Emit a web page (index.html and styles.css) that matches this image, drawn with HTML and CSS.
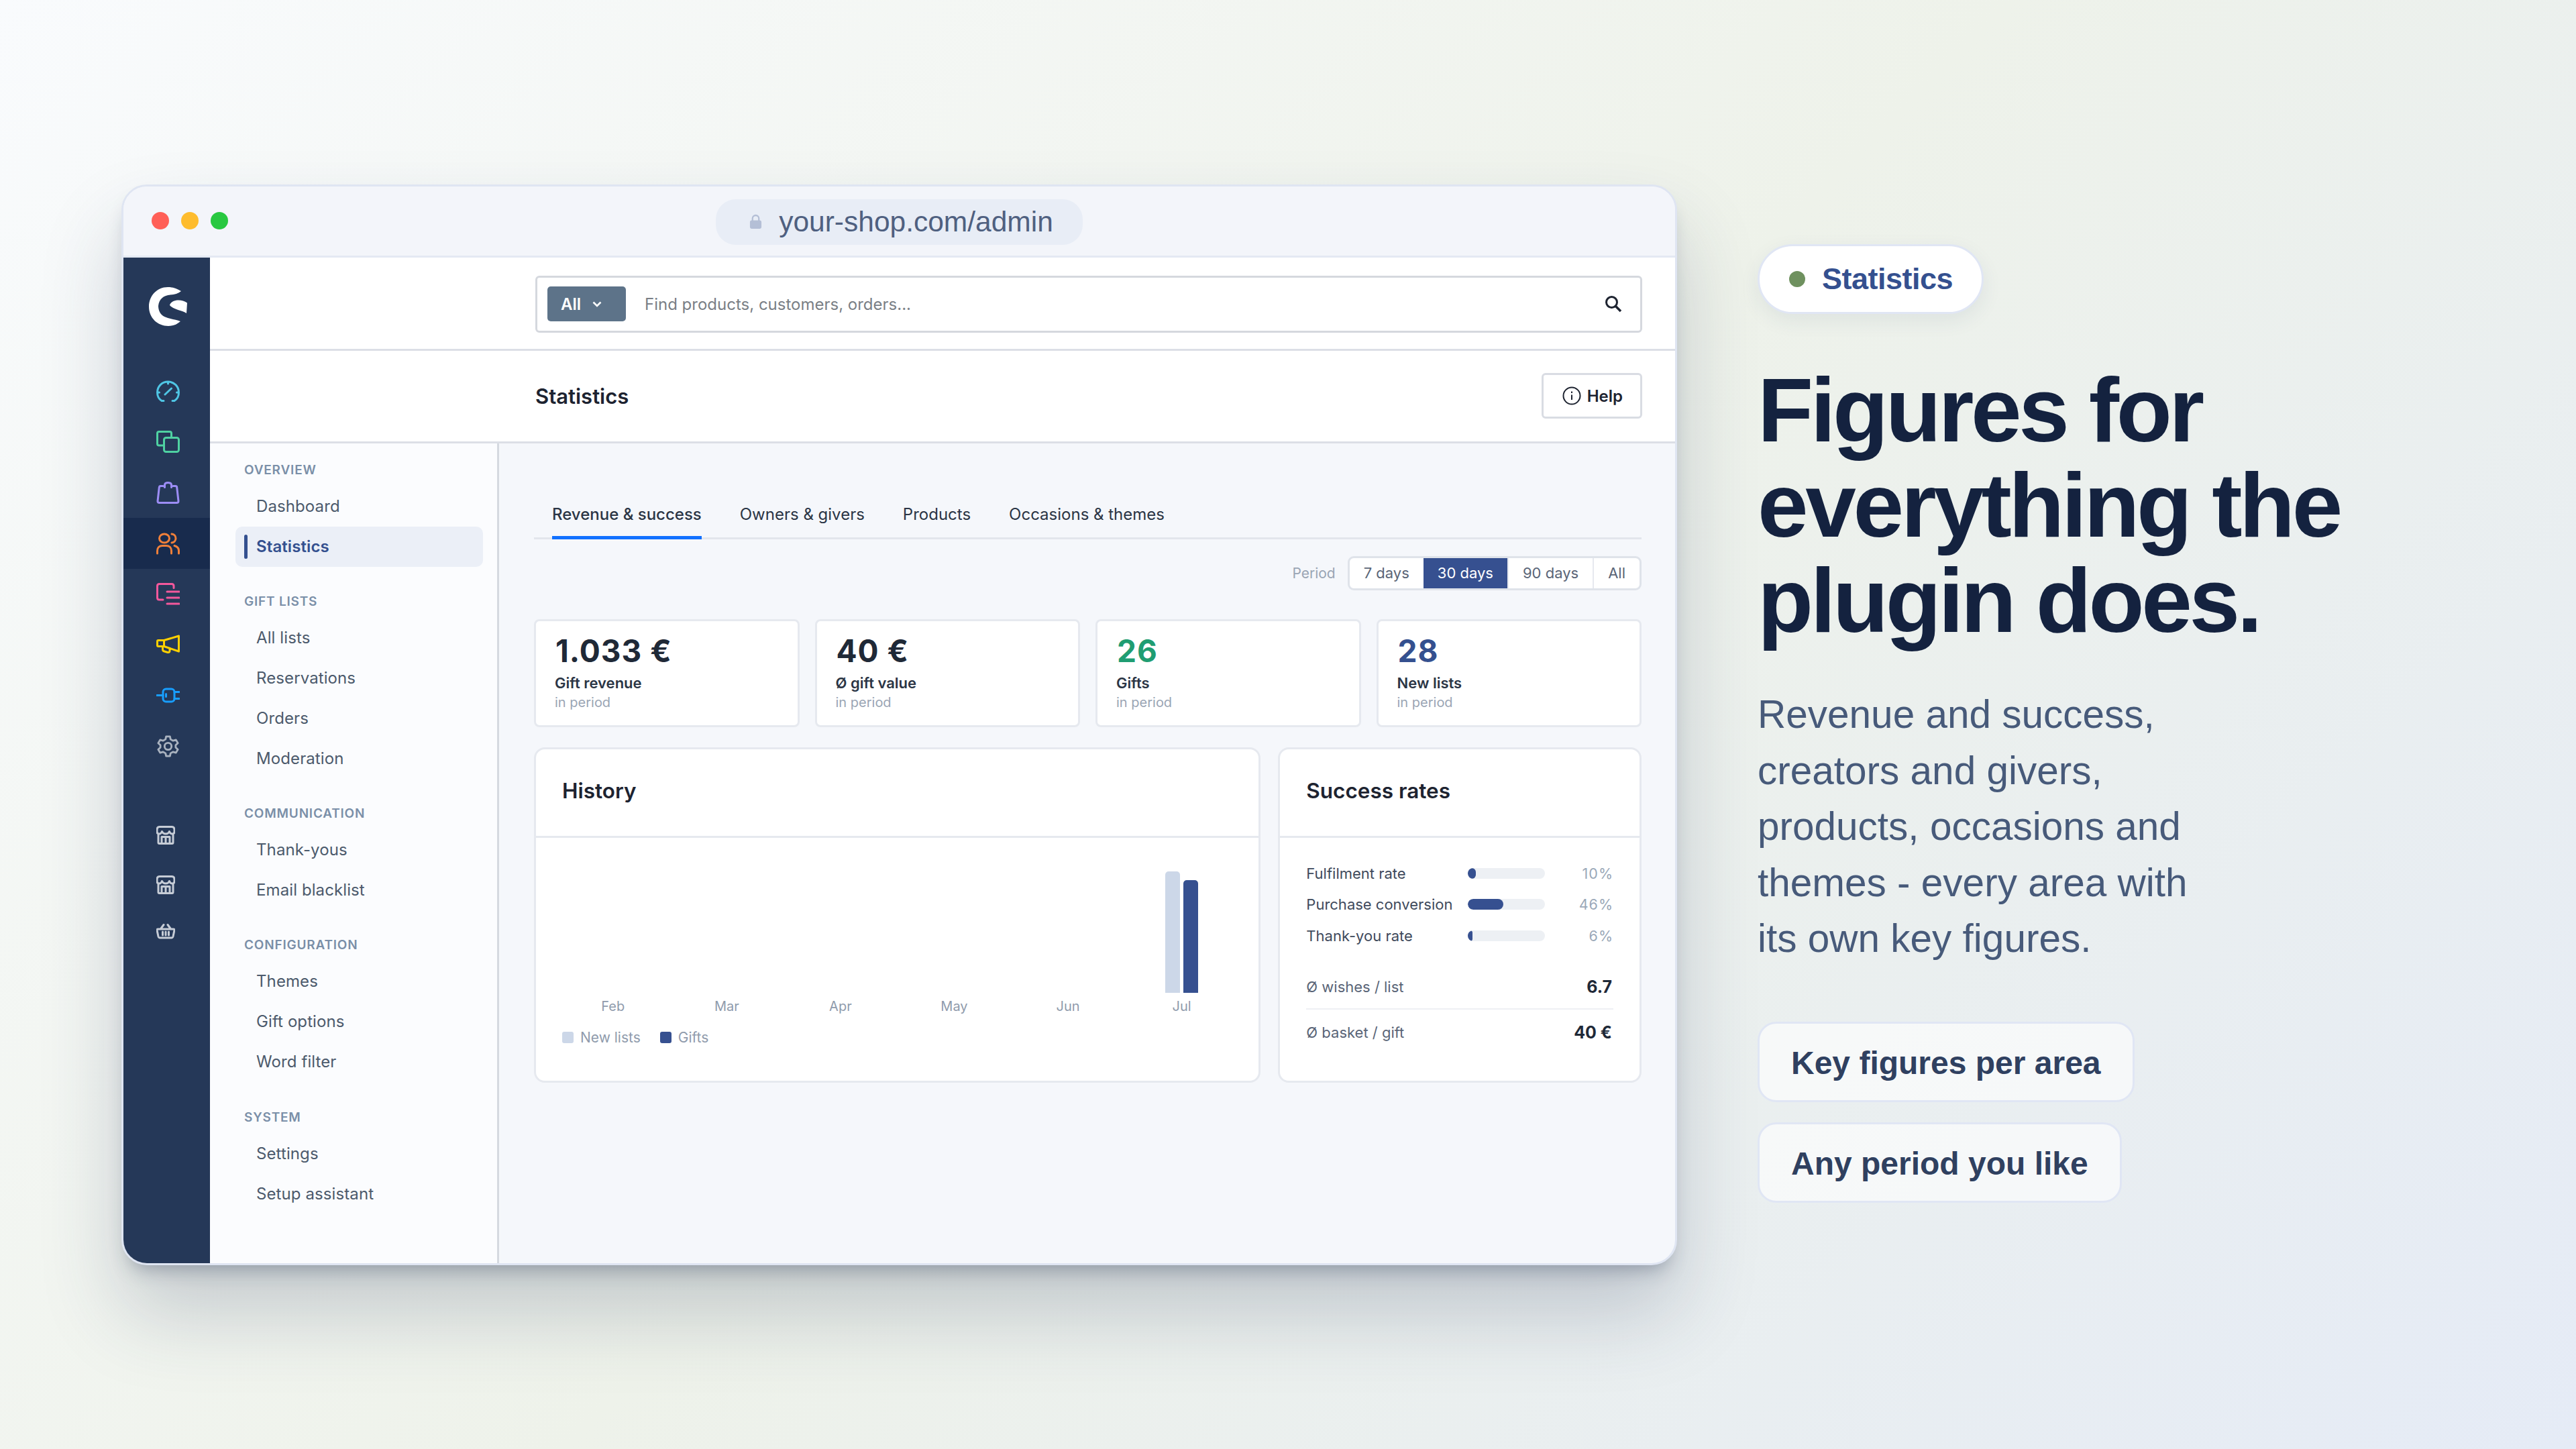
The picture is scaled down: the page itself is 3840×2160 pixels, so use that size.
FILE: index.html
```html
<!DOCTYPE html>
<html lang="en">
<head>
	<meta charset="utf-8">
	<title>Statistics</title>
	<link rel="stylesheet" href="styles.css">
</head>
<body>
	<div class="stage">
		<div class="window">
			<div class="window__bar">
				<div class="window__dots">
					<span class="dot dot--red"></span>
					<span class="dot dot--yellow"></span>
					<span class="dot dot--green"></span>
				</div>
				<div class="url">
					<svg class="url__lock" viewBox="0 0 20 24"><path d="M5 11V7a5 5 0 0 1 10 0v4" fill="none" stroke="currentColor" stroke-width="2.4"/><rect x="1" y="10" width="18" height="13" rx="2.5" fill="currentColor"/></svg>
					<span>your-shop.com/admin</span>
				</div>
			</div>
			<div class="window__body">
				<nav class="rail">
					<div class="rail__logo">
						<svg viewBox="0 0 58 58" width="58" height="58"><path fill="#fff" d="M48 6C41 1.500 35 0 28 0C12 0 0 13 0 29C0 46 13 58 29 58C36 58 42 55.500 47 51C40 48 30 47.500 23 44C17 41 14 35 14 28C15 18 22 12 32 11.500C38 11 44 9.500 48 6Z"/><path fill="#fff" d="M31 27C33 19 48 17 57 23.500L56 39C48 34 37 34 31 27Z"/></svg>
					</div>
					<a class="rail__item rail__item--cyan">
						<svg viewBox="0 0 35 33"><path d="M8 30.500C4 28 1.500 23 1.500 18C1.500 9 8.500 2 17.500 2S33.500 9 33.500 18C33.500 23 31 28 27 30.500M17.500 2V5M1.500 18H4.500M33.500 18H30.500M13 21L22.500 12M8 30.500H11M24 30.500H27"/></svg>
					</a>
					<a class="rail__item rail__item--green">
						<svg viewBox="0 0 35 33"><path d="M10.500 22H4Q1.500 22 1.500 19.500V4Q1.500 1.500 4 1.500H20Q22.500 1.500 22.500 4V10.500"/><rect x="11.500" y="10.500" width="22" height="21" rx="3"/></svg>
					</a>
					<a class="rail__item rail__item--purple">
						<svg viewBox="0 0 35 33"><path d="M10 6.500H6.500Q4.500 6.500 4.300 8.500L2 29Q2 31.500 4.500 31.500H30.500Q33 31.500 33 29L30.700 8.500Q30.500 6.500 28.500 6.500H25M12.500 8.500V5Q12.500 1.500 17.500 1.500T22.500 5V8.500"/></svg>
					</a>
					<a class="rail__item rail__item--orange rail__item--active">
						<svg viewBox="0 0 35 33"><ellipse cx="12" cy="8.500" rx="7.500" ry="6.500"/><path d="M1.500 31V27C1.500 22 5 19.500 9 19.500H15C19 19.500 22.500 22 22.500 27V31M23 2C26.500 2.500 29 5 29 8.500S26.500 14.500 23 15M27 19.500C31 20.500 33.500 23 33.500 27V31"/></svg>
					</a>
					<a class="rail__item rail__item--pink">
						<svg viewBox="0 0 35 33"><path d="M26 7.500V4.500Q26 1.500 23 1.500H4.500Q1.500 1.500 1.500 4.500V22Q1.500 25 4.500 25H10M16 13H34M16 22H34M16 31H34"/></svg>
					</a>
					<a class="rail__item rail__item--yellow">
						<svg viewBox="0 0 35 33"><path d="M11.500 9.500H3Q1.500 9.500 1.500 11V17Q1.500 18.500 3 18.500H11.500ZM11.500 9.500L33.500 3V26L11.500 18.500M9.500 19V23Q9.500 25.500 12 26L17 27.500Q20 28 20 25V22.500"/></svg>
					</a>
					<a class="rail__item rail__item--blue">
						<svg viewBox="0 0 35 33"><rect x="10" y="7" width="17" height="19" rx="4.500"/><path d="M1 16.500H10M27 11.500H34M27 21.500H34M14.500 14.500V18.500"/></svg>
					</a>
					<a class="rail__item rail__item--grey">
						<svg viewBox="0 0 35 35"><circle cx="17.500" cy="17.500" r="5.500"/><path d="M14.500 2H20.500L21.500 6.500L25.500 8.700L30 7.300L33 12.500L29.600 15.700V19.300L33 22.500L30 27.700L25.500 26.300L21.500 28.500L20.500 33H14.500L13.500 28.500L9.500 26.300L5 27.700L2 22.500L5.400 19.300V15.700L2 12.500L5 7.300L9.500 8.700L13.500 6.500Z"/></svg>
					</a>
					<div class="rail__shops">
						<a class="rail__shop">
							<svg viewBox="0 0 28 28"><path d="M3 12V25Q3 26.500 4.500 26.500H23.500Q25 26.500 25 25V12M5 1.500H23Q27 1.500 27 6V9C27 11 25.500 12 23.500 12S20.500 11 19.500 8.500C18.500 11 16.500 12 14 12S9.500 11 8.500 8.500C7.500 11 6.500 12 4.500 12S1 11 1 9V6Q1 1.500 5 1.500ZM8 26V16.500H20V26M14 16.500V26"/></svg>
						</a>
						<a class="rail__shop">
							<svg viewBox="0 0 28 28"><path d="M3 12V25Q3 26.500 4.500 26.500H23.500Q25 26.500 25 25V12M5 1.500H23Q27 1.500 27 6V9C27 11 25.500 12 23.500 12S20.500 11 19.500 8.500C18.500 11 16.500 12 14 12S9.500 11 8.500 8.500C7.500 11 6.500 12 4.500 12S1 11 1 9V6Q1 1.500 5 1.500ZM8 26V16.500H20V26M14 16.500V26"/></svg>
						</a>
						<a class="rail__shop">
							<svg viewBox="0 0 28 22"><path d="M2.500 8H25.500Q27 8 27 9.500L25 19Q24.500 21 22.500 21H5.500Q3.500 21 3 19L1 9.500Q1 8 2.500 8ZM7 7L11 1.500M21 7L17 1.500M9.500 12V17M14 12V17M18.500 12V17"/></svg>
						</a>
					</div>
				</nav>
				<div class="admin">
					<div class="topbar">
						<div class="search">
							<div class="search__scope">All
								<svg viewBox="0 0 14 9" width="14" height="9"><path d="M1.500 1.500L7 7L12.500 1.500" fill="none" stroke="#fff" stroke-width="2.600"/></svg>
							</div>
							<div class="search__text">Find products, customers, orders...</div>
							<svg class="search__icon" viewBox="0 0 26 26"><circle cx="10.500" cy="10.500" r="8" fill="none" stroke="currentColor" stroke-width="3"/><path d="M16.500 16.500L24 24" stroke="currentColor" stroke-width="3.500"/></svg>
						</div>
					</div>
					<div class="head">
						<h2 class="head__title">Statistics</h2>
						<div class="help">
							<svg viewBox="0 0 28 28" width="28" height="28"><circle cx="14" cy="14" r="12.500" fill="none" stroke="currentColor" stroke-width="2"/><path d="M14 12.500V20M14 7.500V10" stroke="currentColor" stroke-width="2"/></svg>
							Help
						</div>
					</div>
					<div class="columns">
						<aside class="subnav">
							<div class="subnav__group">
								<div class="subnav__label">Overview</div>
								<a class="subnav__item">Dashboard</a>
								<a class="subnav__item subnav__item--active">Statistics</a>
							</div>
							<div class="subnav__group">
								<div class="subnav__label">Gift lists</div>
								<a class="subnav__item">All lists</a>
								<a class="subnav__item">Reservations</a>
								<a class="subnav__item">Orders</a>
								<a class="subnav__item">Moderation</a>
							</div>
							<div class="subnav__group">
								<div class="subnav__label">Communication</div>
								<a class="subnav__item">Thank-yous</a>
								<a class="subnav__item">Email blacklist</a>
							</div>
							<div class="subnav__group">
								<div class="subnav__label">Configuration</div>
								<a class="subnav__item">Themes</a>
								<a class="subnav__item">Gift options</a>
								<a class="subnav__item">Word filter</a>
							</div>
							<div class="subnav__group">
								<div class="subnav__label">System</div>
								<a class="subnav__item">Settings</a>
								<a class="subnav__item">Setup assistant</a>
							</div>
						</aside>
						<main class="content">
							<div class="tabs">
								<a class="tabs__item tabs__item--active">Revenue &amp; success</a>
								<a class="tabs__item">Owners &amp; givers</a>
								<a class="tabs__item">Products</a>
								<a class="tabs__item">Occasions &amp; themes</a>
							</div>
							<div class="period">
								<span class="period__label">Period</span>
								<div class="period__group">
									<span class="period__item">7 days</span>
									<span class="period__item period__item--active">30 days</span>
									<span class="period__item">90 days</span>
									<span class="period__item">All</span>
								</div>
							</div>
							<div class="kpis">
								<div class="kpi">
									<div class="kpi__value">1.033 €</div>
									<div class="kpi__label">Gift revenue</div>
									<div class="kpi__sub">in period</div>
								</div>
								<div class="kpi">
									<div class="kpi__value">40 €</div>
									<div class="kpi__label">Ø gift value</div>
									<div class="kpi__sub">in period</div>
								</div>
								<div class="kpi">
									<div class="kpi__value kpi__value--green">26</div>
									<div class="kpi__label">Gifts</div>
									<div class="kpi__sub">in period</div>
								</div>
								<div class="kpi">
									<div class="kpi__value kpi__value--blue">28</div>
									<div class="kpi__label">New lists</div>
									<div class="kpi__sub">in period</div>
								</div>
							</div>
							<div class="panels">
								<section class="panel">
									<div class="panel__head">History</div>
									<div class="chart">
										<div class="chart__col"><div class="chart__plot"></div><span>Feb</span></div>
										<div class="chart__col"><div class="chart__plot"></div><span>Mar</span></div>
										<div class="chart__col"><div class="chart__plot"></div><span>Apr</span></div>
										<div class="chart__col"><div class="chart__plot"></div><span>May</span></div>
										<div class="chart__col"><div class="chart__plot"></div><span>Jun</span></div>
										<div class="chart__col">
											<div class="chart__plot">
												<i class="chart__bar chart__bar--light" style="height: 181px"></i>
												<i class="chart__bar chart__bar--dark" style="height: 168px"></i>
											</div>
											<span>Jul</span>
										</div>
									</div>
									<div class="legend">
										<span class="legend__item"><i class="legend__swatch legend__swatch--light"></i>New lists</span>
										<span class="legend__item"><i class="legend__swatch legend__swatch--dark"></i>Gifts</span>
									</div>
								</section>
								<section class="panel">
									<div class="panel__head">Success rates</div>
									<div class="rates">
										<div class="rate">
											<span class="rate__name">Fulfilment rate</span>
											<div class="rate__track"><div class="rate__fill" style="width: 10%"></div></div>
											<span class="rate__pct">10%</span>
										</div>
										<div class="rate">
											<span class="rate__name">Purchase conversion</span>
											<div class="rate__track"><div class="rate__fill" style="width: 46%"></div></div>
											<span class="rate__pct">46%</span>
										</div>
										<div class="rate">
											<span class="rate__name">Thank-you rate</span>
											<div class="rate__track"><div class="rate__fill" style="width: 6%"></div></div>
											<span class="rate__pct">6%</span>
										</div>
										<div class="avgs">
											<div class="avg"><span>Ø wishes / list</span><b>6.7</b></div>
											<div class="avg"><span>Ø basket / gift</span><b>40 €</b></div>
										</div>
									</div>
								</section>
							</div>
						</main>
					</div>
				</div>
			</div>
		</div>
		<div class="side">
			<div class="badge"><i class="badge__dot"></i>Statistics</div>
			<h1 class="side__title">Figures for everything the plugin does.</h1>
			<p class="side__text">Revenue and success, creators and givers, products, occasions and themes - every area with its own key figures.</p>
			<div class="side__chips">
				<div class="chip">Key figures per area</div>
				<div class="chip">Any period you like</div>
			</div>
		</div>
	</div>
</body>
</html>
```

FILE: styles.css
```css
* {
	box-sizing: border-box;
}
html, body {
	margin: 0;
	height: 100%;
}
body {
	width: 3840px;
	height: 2160px;
	overflow: hidden;
	background: linear-gradient(135deg, #f9fbfd 0%, #eef2ea 50%, #e5ebf6 100%);
	font-family: Inter, "Liberation Sans", sans-serif;
}
.stage {
	display: flex;
	align-items: center;
	height: 100%;
	padding-left: 181px;
}

/* browser window */
.window {
	display: flex;
	flex-direction: column;
	flex: none;
	width: 2319px;
	height: 1611px;
	border: 3px solid #dfe5f2;
	border-radius: 38px;
	overflow: hidden;
	background: #f5f7fb;
	box-shadow: 0 18px 28px -12px rgba(40, 55, 80, .35), 0 70px 120px rgba(40, 55, 90, .22);
}
.window__bar {
	position: relative;
	display: flex;
	align-items: center;
	justify-content: center;
	flex: none;
	height: 106px;
	background: #f3f5fa;
	border-bottom: 3px solid #e4e9f3;
}
.window__dots {
	position: absolute;
	left: 42px;
	display: flex;
	gap: 18px;
}
.dot {
	width: 26px;
	height: 26px;
	border-radius: 50%;
}
.dot--red { background: #ff5f57; }
.dot--yellow { background: #febc2e; }
.dot--green { background: #28c840; }
.url {
	display: flex;
	align-items: center;
	gap: 25px;
	height: 68px;
	margin-top: 3px;
	padding: 0 44px 0 50px;
	border-radius: 30px;
	background: #e8edf6;
	color: #4f6080;
	font-family: "Liberation Sans", sans-serif;
	font-size: 42.500px;
}
.url__lock {
	width: 19px;
	height: 23px;
	color: #b4bfd6;
}
.window__body {
	display: flex;
	flex: 1;
	min-height: 0;
}

/* dark icon rail */
.rail {
	flex: none;
	width: 129px;
	background: #253858;
}
.rail__logo {
	height: 162px;
	padding: 44px 0 0 38px;
}
.rail__item {
	display: flex;
	align-items: center;
	height: 75.600px;
	padding-left: 49px;
}
.rail__item svg,
.rail__shop svg {
	fill: none;
	stroke: currentColor;
	stroke-width: 3;
	stroke-linecap: round;
	stroke-linejoin: round;
}
.rail__item svg {
	width: 35px;
	height: 33px;
}
.rail__item--active { background: #182b4d; }
.rail__item--cyan { color: #4fc5e4; }
.rail__item--green { color: #4fd1a2; }
.rail__item--purple { color: #9c8df5; }
.rail__item--orange { color: #f0803a; }
.rail__item--pink { color: #f3589c; }
.rail__item--yellow { color: #ffd000; }
.rail__item--blue { color: #189eff; }
.rail__item--grey { color: #a9b2bf; }
.rail__shops {
	margin-top: 58px;
	color: #c6ccd6;
}
.rail__shop {
	display: flex;
	align-items: center;
	height: 74px;
	padding-left: 49px;
}
.rail__shop:last-child {
	height: 64px;
}
.rail__shop svg {
	width: 28px;
	height: 28px;
}

.admin {
	display: flex;
	flex-direction: column;
	flex: 1;
	min-width: 0;
}
.topbar {
	flex: none;
	height: 139px;
	padding: 27px 49px 0 485px;
	background: #fff;
	border-bottom: 3px solid #dcdfe6;
}
.search {
	display: flex;
	align-items: center;
	height: 85px;
	padding: 0 27px 0 15px;
	border: 3px solid #d5d8de;
	border-radius: 6px;
}
.search__scope {
	display: flex;
	align-items: center;
	gap: 17px;
	width: 117px;
	height: 52px;
	padding-left: 20px;
	border-radius: 5px;
	background: #5d7389;
	color: #fff;
	font-size: 24px;
	font-weight: 600;
}
.search__text {
	flex: 1;
	margin-left: 28px;
	color: #7a7f86;
	font-size: 24px;
}
.search__icon {
	width: 26px;
	height: 26px;
	color: #1d2330;
}
.head {
	display: flex;
	align-items: center;
	justify-content: space-between;
	flex: none;
	height: 138px;
	padding: 0 49px 0 485px;
	background: #fff;
	border-bottom: 3px solid #dcdfe6;
}
.head__title {
	margin: 0;
	color: #1d2330;
	font-size: 31px;
	font-weight: 600;
}
.help {
	display: flex;
	align-items: center;
	gap: 9px;
	height: 68px;
	padding: 0 26px 0 28px;
	border: 3px solid #d9dce3;
	border-radius: 6px;
	color: #1d2330;
	font-size: 24px;
	font-weight: 600;
}
.columns {
	display: flex;
	flex: 1;
	min-height: 0;
}

/* sub navigation */
.subnav {
	flex: none;
	width: 431px;
	padding: 28px 21px 0 38px;
	background: #fbfcfe;
	border-right: 3px solid #d5d9e0;
}
.subnav__group {
	margin-bottom: 40.250px;
}
.subnav__label {
	height: 24px;
	margin: 0 0 12px 13px;
	color: #7a8fa8;
	font-size: 19px;
	font-weight: 600;
	line-height: 24px;
	letter-spacing: .8px;
	text-transform: uppercase;
}
.subnav__item {
	position: relative;
	display: block;
	height: 60px;
	padding-left: 31px;
	border-radius: 10px;
	color: #4c5a6c;
	font-size: 24px;
	line-height: 60px;
	letter-spacing: .1px;
}
.subnav__item--active {
	background: #ebeff7;
	color: #34508f;
	font-weight: 600;
}
.subnav__item--active::before {
	content: "";
	position: absolute;
	left: 13px;
	top: 12px;
	width: 5px;
	height: 36px;
	border-radius: 3px;
	background: #34508f;
}

/* content area */
.content {
	flex: 1;
	min-width: 0;
	padding: 0 50px 0 52px;
}
.tabs {
	display: flex;
	gap: 57px;
	height: 143px;
	padding: 81px 0 0 27px;
	border-bottom: 3px solid #e3e6ec;
}
.tabs__item {
	height: 62px;
	color: #2b3545;
	font-size: 24px;
	line-height: 50px;
}
.tabs__item--active {
	border-bottom: 5px solid #1170ff;
	font-weight: 500;
}
.period {
	display: flex;
	align-items: center;
	justify-content: flex-end;
	gap: 18px;
	margin-top: 25px;
}
.period__label {
	color: #9aa5b4;
	font-size: 21px;
}
.period__group {
	display: flex;
	height: 51px;
	border: 3px solid #dfe3ea;
	border-radius: 9px;
	overflow: hidden;
	background: #fff;
}
.period__item {
	display: flex;
	align-items: center;
	padding: 0 21px;
	border-left: 2px solid #e6e9ef;
	color: #5a6577;
	font-size: 22px;
}
.period__item:first-child {
	border-left: 0;
}
.period__item--active {
	border-left: 0;
	background: #365090;
	color: #fff;
}
.kpis {
	display: grid;
	grid-template-columns: repeat(4, 1fr);
	gap: 23px;
	margin-top: 43px;
}
.kpi {
	height: 161px;
	padding: 16px 28px 0;
	border: 3px solid #e6e9ef;
	border-radius: 8px;
	background: #fff;
}
.kpi__value {
	margin-left: 1px;
	color: #1f2937;
	font-size: 46px;
	font-weight: 700;
	line-height: 56px;
	letter-spacing: 1px;
}
.kpi__value--green { color: #1f9d72; }
.kpi__value--blue { color: #34508f; }
.kpi__label {
	margin-top: 6px;
	color: #2b3545;
	font-size: 22px;
	font-weight: 600;
	line-height: 28px;
}
.kpi__sub {
	color: #9aa5b4;
	font-size: 20px;
	line-height: 30px;
}
.panels {
	display: grid;
	grid-template-columns: 2fr 1fr;
	gap: 26px;
	margin-top: 30px;
}
.panel {
	height: 500px;
	border: 3px solid #e6e9ef;
	border-radius: 16px;
	background: #fff;
}
.panel__head {
	height: 132px;
	padding-left: 39px;
	border-bottom: 3px solid #e6e9ef;
	color: #1d2330;
	font-size: 31.500px;
	font-weight: 600;
	line-height: 124px;
}

/* history chart */
.chart {
	display: flex;
	margin: 0 30px;
}
.chart__col {
	flex: 1;
	color: #8f9bac;
	font-size: 20px;
	text-align: center;
}
.chart__plot {
	display: flex;
	align-items: flex-end;
	justify-content: center;
	gap: 5px;
	height: 231px;
	margin-bottom: 8px;
}
.chart__bar {
	width: 22px;
	border-radius: 5px 5px 0 0;
}
.chart__bar--light { background: #ccd7e8; }
.chart__bar--dark { background: #365090; }
.legend {
	display: flex;
	gap: 29px;
	margin-top: 22px;
	padding-left: 39px;
}
.legend__item {
	display: flex;
	align-items: center;
	gap: 10px;
	color: #8f9bac;
	font-size: 21px;
}
.legend__swatch {
	width: 17px;
	height: 17px;
	border-radius: 3px;
}
.legend__swatch--light { background: #ccd7e8; }
.legend__swatch--dark { background: #365090; }

/* success rates */
.rates {
	padding: 30px 39px 0 39px;
}
.rate {
	display: grid;
	grid-template-columns: 241px 115px 1fr;
	align-items: center;
	height: 46.500px;
}
.rate__name {
	color: #3f4a5c;
	font-size: 22px;
	white-space: nowrap;
}
.rate__track {
	height: 16px;
	border-radius: 8px;
	background: #edf0f4;
	overflow: hidden;
}
.rate__fill {
	height: 100%;
	border-radius: 8px;
	background: #365090;
}
.rate__pct {
	color: #9aa8b8;
	font-size: 21.500px;
	letter-spacing: 1px;
	text-align: right;
}
.avgs {
	margin-top: 20px;
}
.avg {
	display: flex;
	align-items: center;
	justify-content: space-between;
	height: 67px;
	color: #5a6577;
	font-size: 22px;
}
.avg:first-child {
	border-bottom: 2px solid #eef0f4;
}
.avg b {
	margin-right: 2px;
	color: #1f2937;
	font-size: 25px;
	font-weight: 700;
}

/* right column */
.side {
	margin-left: 120px;
	padding-bottom: 3px;
	font-family: "Liberation Sans", sans-serif;
}
.badge {
	display: inline-flex;
	align-items: center;
	gap: 25px;
	height: 104px;
	padding: 0 43px 0 44px;
	border: 3px solid #e0e6f4;
	border-radius: 52px;
	background: #fff;
	box-shadow: 0 10px 30px rgba(40, 60, 100, .08);
	color: #34508f;
	font-size: 45px;
	font-weight: 700;
	letter-spacing: -.5px;
}
.badge__dot {
	width: 24px;
	height: 24px;
	border-radius: 50%;
	background: #6f915f;
}
.side__title {
	max-width: 900px;
	margin: 72px 0 0;
	color: #14223f;
	font-size: 136px;
	font-weight: 700;
	line-height: 142px;
	letter-spacing: -4.400px;
}
.side__text {
	max-width: 660px;
	margin: 57px 0 0;
	color: #475a7a;
	font-size: 58.500px;
	line-height: 83.500px;
}
.side__chips {
	display: flex;
	flex-direction: column;
	align-items: flex-start;
	gap: 30px;
	margin-top: 82px;
}
.chip {
	height: 120px;
	padding: 0 47px;
	border: 3px solid #e0e6f4;
	border-radius: 28px;
	background: rgba(255, 255, 255, .6);
	color: #2f4060;
	font-size: 48px;
	font-weight: 700;
	line-height: 117px;
}
```
